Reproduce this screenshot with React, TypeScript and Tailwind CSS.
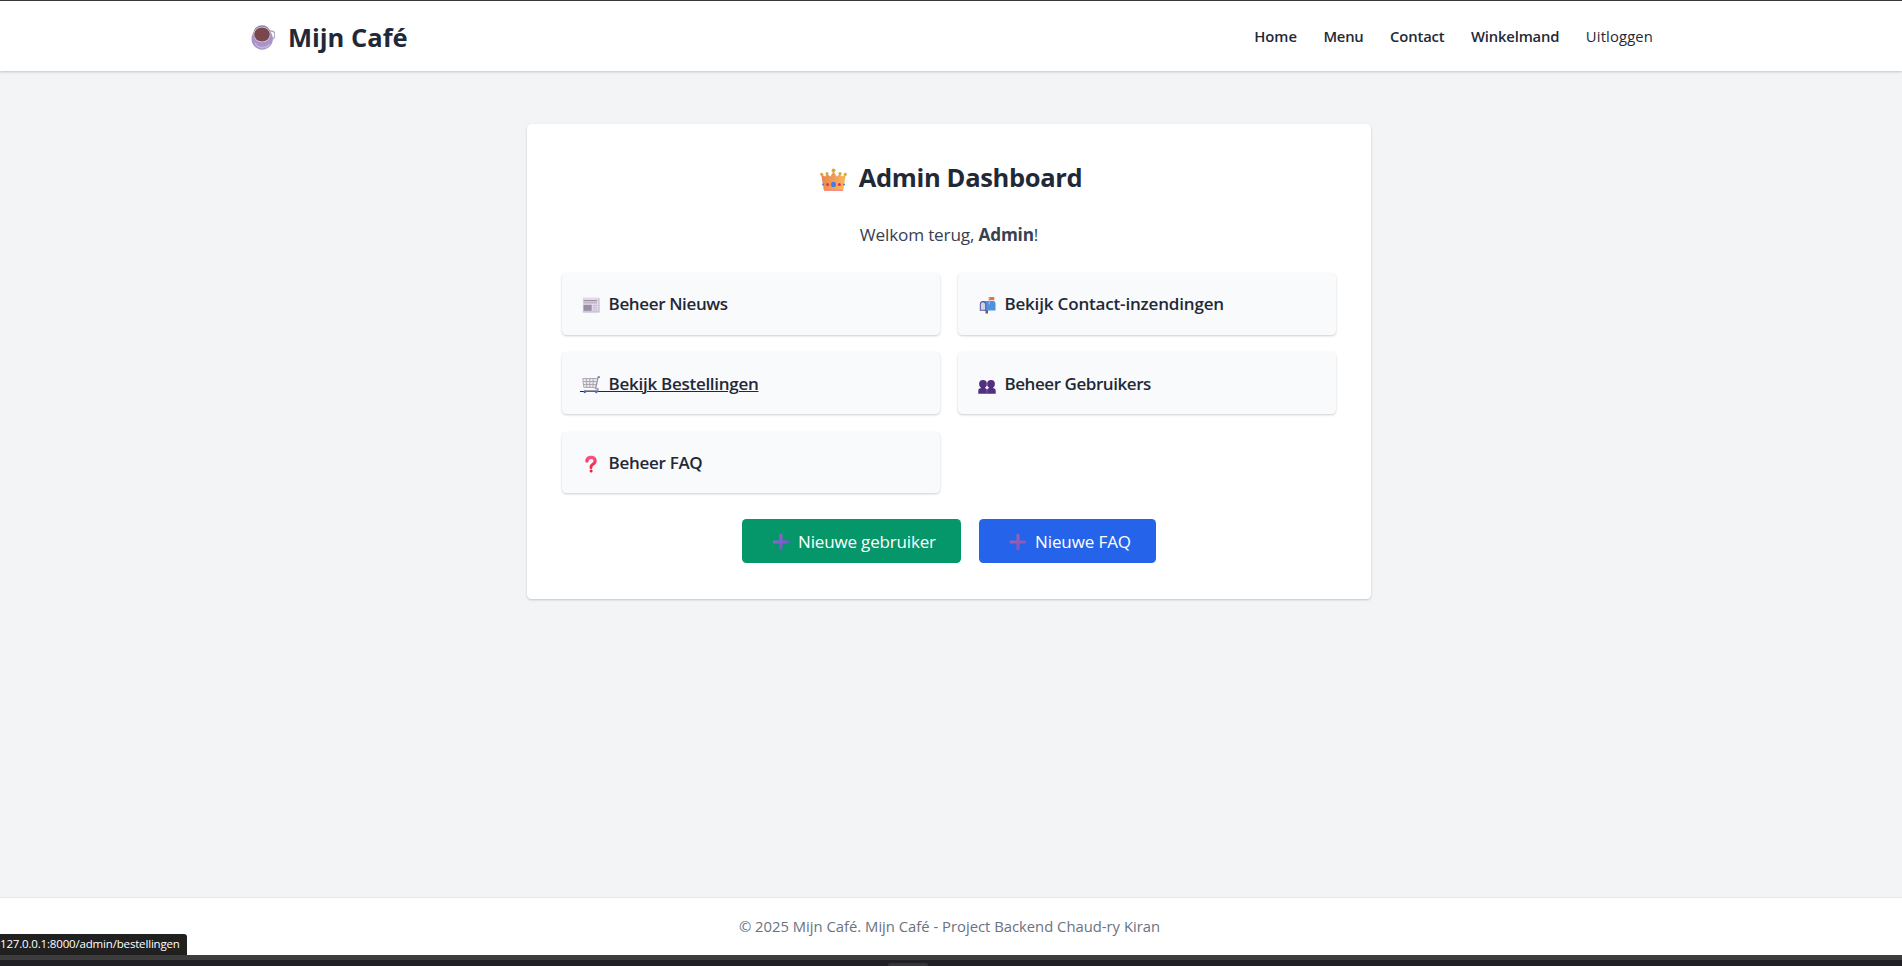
import React from "react";

const Cup = () => (
  <svg viewBox="0 0 24 26" className="h-[26px] w-6">
    <circle cx="20" cy="10" r="4" fill="none" stroke="#b3a6c4" strokeWidth="1.6" />
    <path d="M0.5 14a10.7 10.7 0 1 0 21.4 0c0-4-2-7-3.500-8.500L4 5.500C2 8 .5 10 .5 14z" fill="#a993c7" />
    <path d="M4 18c3 6 11 6 15 1" fill="none" stroke="#c3b3d8" strokeWidth="1.6" />
    <ellipse cx="11" cy="8.500" rx="8.800" ry="8.200" fill="#8f83a0" />
    <ellipse cx="11" cy="9.500" rx="8.500" ry="7.800" fill="#d8cfe2" />
    <ellipse cx="11" cy="9.500" rx="7.800" ry="6.900" fill="#7a474d" />
  </svg>
);

const Crown = () => (
  <svg viewBox="0 0 27 24" className="h-6 w-[27px]">
    <defs>
      <linearGradient id="crown" x1="0" x2="1" y1="0.300" y2="0.600">
        <stop offset="0" stopColor="#e5834f" />
        <stop offset="1" stopColor="#fdb95a" />
      </linearGradient>
    </defs>
    <path d="M1.200 6.500L5.300 8.500 7 6l3.500 2.500L13.500 3l3 5.500L20 6l1.700 2.500 4.100-2L23.300 21.500c-.2 1-1 1.500-2 1.500H5.700c-1 0-1.800-.5-2-1.500z" fill="url(#crown)" />
    <path d="M3.700 21.500h19.600c-.2 1-1 1.500-2 1.500H5.700c-1 0-1.800-.5-2-1.500z" fill="#f58c83" />
    <g fill="#d9a536">
      <circle cx="13.500" cy="2.300" r="1.900" />
      <circle cx="1.700" cy="6.300" r="1.500" />
      <circle cx="25.300" cy="6.300" r="1.500" />
      <circle cx="7" cy="5.600" r="1.500" />
      <circle cx="20" cy="5.600" r="1.500" />
    </g>
    <ellipse cx="13.500" cy="16.500" rx="2.500" ry="2.700" fill="#3f7df0" />
    <circle cx="7.600" cy="16.500" r="1.500" fill="#ee2d55" />
    <circle cx="19.400" cy="16.500" r="1.500" fill="#ee2d55" />
    <circle cx="3" cy="16.500" r="1" fill="#4d83cf" />
    <circle cx="24" cy="16.500" r="1" fill="#4d83cf" />
  </svg>
);

const News = () => (
  <svg viewBox="0 0 18 18" className="h-[18px] w-[18px]">
    <path d="M.8 1.500h16.700v15H.8z" fill="#e2d9ea" />
    <path d="M16.300 2.500h1.200v14H.8v-1.200h15.500z" fill="#c9bbd9" />
    <path d="M1.500 4h13.500v1.200H1.500zM1.500 6.500h13.500v.8H1.500z" fill="#978f9f" />
    <path d="M1.500 8.800h8.200v6H1.500z" fill="#998fa4" />
    <path d="M11 8.900h4v1h-4zM11 11.200h4v1h-4zM11 13.400h4v1h-4z" fill="#c3b8ce" />
  </svg>
);

const Mailbox = () => (
  <svg viewBox="0 0 18 18" className="h-[18px] w-[18px]">
    <path d="M7.500 9h2.500v8.500H7.500z" fill="#7b5657" />
    <path d="M4.500 5H15c1.800 0 2.500 1.300 2.500 3v6.500H6z" fill="#4d92dc" />
    <path d="M1.800 8.500C1.800 6.500 2.800 5 4.800 5S8.200 6.500 8.200 8.500v6.200H1.800z" fill="#5357a6" />
    <path d="M2.800 8.800c0-1.600.8-2.600 2-2.600s2.400 1 2.400 2.600v5H2.800z" fill="#d9d0e8" />
    <path d="M10.700 1H12v7.500h-1.300z" fill="#b9a9b8" />
    <path d="M11.700 1h4.600v3.200h-4.600z" fill="#f3694b" />
  </svg>
);

const Cart = () => (
  <svg viewBox="0 0 18 18" className="h-[18px] w-[18px]">
    <path d="M.8 2.500l1 8.800 12 1L15.300 2.500z" fill="#ebe8ee" />
    <path d="M.8 2.500l1 8.800 12 .4M.8 2.500h14M1.300 5.500h13M1.600 8.500h12.300M4.300 2.500l.6 8.800M7.700 2.500l.2 8.800M11.200 2.500l-.2 8.800" fill="none" stroke="#aea8b4" strokeWidth="1" />
    <path d="M17.500 1.300h-1.500l-2.300 11.200 2.500.5-.3 1.800H2" fill="none" stroke="#a099a7" strokeWidth="1.400" />
    <path d="M18 1.200h-2" stroke="#4775cf" strokeWidth="1.300" />
    <circle cx="2.800" cy="16" r="1.200" fill="#3c72cf" />
    <circle cx="14.300" cy="16" r="1.200" fill="#3c72cf" />
  </svg>
);

const Users = () => (
  <svg viewBox="0 0 18 18" className="h-[18px] w-[18px]" fill="#50307f">
    <ellipse cx="5" cy="6" rx="3.900" ry="4" />
    <ellipse cx="13" cy="6" rx="3.900" ry="4" />
    <path d="M3 8.500h4v2.500H3zM11 8.500h4v2.500h-4z" />
    <path d="M.3 15.700v-3c0-1.800 1.200-2.700 3-2.700h3.200c1.500 0 2.500 1 2.500 2.700 0-1.700 1-2.700 2.500-2.700h3.200c1.800 0 3 .9 3 2.700v3z" />
    <path d="M9 12v3.700" stroke="#8b6fc0" strokeWidth=".7" />
  </svg>
);

const Question = () => (
  <svg viewBox="0 0 18 18" className="h-[18px] w-[18px]">
    <defs>
      <linearGradient id="question" x1="0" x2="0" y1="0" y2="1">
        <stop offset="0" stopColor="#fb5590" />
        <stop offset="1" stopColor="#ea2440" />
      </linearGradient>
    </defs>
    <path d="M3.300 6C3.300 2.800 5.600.8 9 .8c3.500 0 5.700 2 5.700 4.900 0 2.600-1.500 3.800-3.100 4.800-.9.600-1.100 1-1.200 2.200-.1.800-.6 1.200-1.300 1.200s-1.500-.5-1.500-1.500c0-2.100.8-3.200 2.200-4.200 1.100-.8 1.700-1.300 1.700-2.400S10.600 3.900 9 3.900 6.700 4.900 6.500 6.300C6.400 7.200 5.800 7.700 5 7.700S3.300 7 3.300 6z" fill="url(#question)" />
    <circle cx="9.100" cy="16" r="1.500" fill="#ea2440" />
  </svg>
);

const Plus = ({ id, end, mid }: { id: string; end: string; mid: string }) => (
  <svg viewBox="0 0 18 18" className="h-[18px] w-[18px]">
    <defs>
      <linearGradient id={id} x1="0" x2="1" y1="0" y2="1">
        <stop offset="0" stopColor={end} />
        <stop offset="1" stopColor={mid} />
      </linearGradient>
    </defs>
    <path d="M7.500 1.200Q9 .2 10.500 1.200V7.500h6.300q1 1.500 0 3h-6.300v6.300q-1.500 1-3 0v-6.300H1.200q-1-1.500 0-3h6.300z" fill={`url(#${id})`} />
  </svg>
);

const tiles = [
  { label: "Beheer Nieuws", icon: <News />, spacing: "tracking-[-0.37px]", shift: "pt-0.5" },
  { label: "Bekijk Contact-inzendingen", icon: <Mailbox />, spacing: "tracking-[-0.17px]", shift: "pt-0.5" },
  { label: "Bekijk Bestellingen", icon: <Cart />, spacing: "tracking-[-0.28px]", shift: "pt-[3px]", active: true },
  { label: "Beheer Gebruikers", icon: <Users />, spacing: "tracking-[-0.43px]", shift: "pt-1.5" },
  { label: "Beheer FAQ", icon: <Question />, spacing: "tracking-[-0.3px]", shift: "pt-0.5" },
];

export default function App() {
  return (
    <div className="flex h-[966px] w-[1902px] flex-col overflow-hidden bg-[#f3f4f6] font-['Open_Sans','Noto_Sans',sans-serif] text-[#1f2937]">
      <div className="h-px shrink-0 bg-[#3a3a3a]" />
      <header className="h-[70px] shrink-0 bg-white shadow-[0_1px_3px_rgba(0,0,0,0.1),0_1px_2px_rgba(0,0,0,0.1)]">
        <div className="ml-[246px] flex h-full w-[1407px] items-center justify-between">
          <div className="flex items-center gap-[13px] pt-1 pl-[5px]">
            <Cup />
            <span className="pb-0.5 text-[25.5px] leading-8 font-bold whitespace-nowrap">Mijn Café</span>
          </div>
          <nav className="flex items-center gap-[26.5px] pb-px text-[14.8px] leading-[22px] font-semibold">
            <a className="tracking-[-0.05px]">Home</a>
            <a className="tracking-[-0.2px]">Menu</a>
            <a className="tracking-[-0.15px]">Contact</a>
            <a className="tracking-[-0.16px]">Winkelmand</a>
            <a className="font-normal tracking-[0.14px]">Uitloggen</a>
          </nav>
        </div>
      </header>

      <main className="flex-1 pt-[53px] pl-[527px]">
        <section className="h-[474.5px] w-[844px] rounded-[4.4px] bg-white px-[35px] pt-[35.2px] shadow-[0_1px_3px_rgba(0,0,0,0.1),0_1px_2px_rgba(0,0,0,0.1)]">
          <div className="flex h-[37px] items-center justify-center gap-3 pl-1">
            <div className="pt-[5px]">
              <Crown />
            </div>
            <h1 className="text-[25.5px] leading-[35px] font-bold tracking-[-0.34px] whitespace-nowrap">Admin Dashboard</h1>
          </div>
          <p className="mt-[25px] text-center text-[17.2px] leading-[28px] tracking-[-0.18px] text-[#374151]">
            Welkom terug, <strong className="font-bold">Admin</strong>!
          </p>
          <div className="mt-6 grid grid-cols-2 gap-[17.6px]">
            {tiles.map((tile) => (
              <a
                key={tile.label}
                className="flex h-[61.6px] items-center rounded-[4.4px] bg-[#f9fafb] pt-px pl-[17.6px] shadow-[0_1px_3px_rgba(0,0,0,0.1),0_1px_2px_rgba(0,0,0,0.1)]"
              >
                <span className="relative flex items-center">
                  {tile.active && <span className="absolute top-5 left-0 h-px w-[29px] bg-[#1f2937]" />}
                  <span className={`relative flex w-[29px] pl-[2.4px] ${tile.shift}`}>{tile.icon}</span>
                  <span
                    className={`text-[17px] leading-[26px] font-semibold whitespace-nowrap ${tile.spacing} ${
                      tile.active ? "underline decoration-1 underline-offset-1" : ""
                    }`}
                  >
                    {tile.label}
                  </span>
                </span>
              </a>
            ))}
          </div>
          <div className="mt-[25.4px] flex justify-center gap-[18px]">
            <a className="flex h-11 w-[219px] items-center rounded-[4.4px] bg-[#059669] pt-0.5 pl-[30px] text-[17px] text-white">
              <Plus id="plus-user" end="#8d70d4" mid="#7a48c8" />
              <span className="ml-2 tracking-[-0.16px] whitespace-nowrap">Nieuwe gebruiker</span>
            </a>
            <a className="flex h-11 w-[177px] items-center rounded-[4.4px] bg-[#2563eb] pt-0.5 pl-[30px] text-[17px] text-white">
              <Plus id="plus-faq" end="#a068b4" mid="#8250b4" />
              <span className="ml-2 tracking-[-0.1px] whitespace-nowrap">Nieuwe FAQ</span>
            </a>
          </div>
        </section>
      </main>

      <footer className="relative h-[58px] shrink-0 border-t border-[#e5e7eb] bg-white pr-[3px] text-center text-[14.8px] leading-[56px] text-[#6b7280]">
        © 2025 Mijn Café. Mijn Café - Project Backend Chaud-ry Kiran
        <div className="absolute bottom-0 left-0 h-[21px] w-[187px] rounded-tr-[3px] bg-[#202020] text-left text-[11.5px] leading-[20px] tracking-[-0.17px] whitespace-nowrap text-white">
          127.0.0.1:8000/admin/bestellingen
        </div>
      </footer>
      <div className="h-[5px] shrink-0 bg-[#3c3c3c]" />
      <div className="flex h-[6px] shrink-0 items-end bg-[#201f23] pl-[888px]">
        <div className="h-[3px] w-10 rounded-t-[2px] bg-[#343338]" />
      </div>
    </div>
  );
}
